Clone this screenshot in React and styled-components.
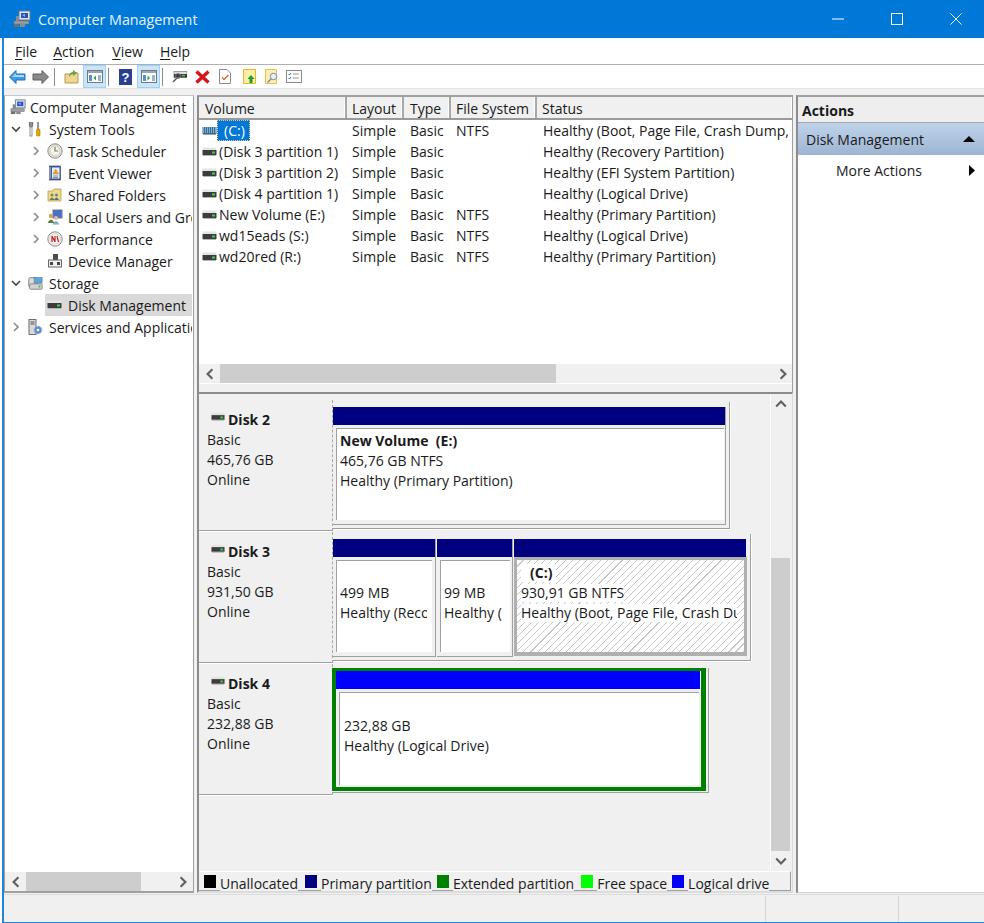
import React from "react";
import styled, { createGlobalStyle } from "styled-components";

const GlobalStyle = createGlobalStyle`
  html, body { margin: 0; padding: 0; background: #fff; }
  body { font-family: "Open Sans", "Noto Sans", sans-serif; font-size: 14px; color: #1a1a1a; }
  * { box-sizing: border-box; }
`;

const Window = styled.div`
  width: 984px;
  height: 923px;
  overflow: hidden;
  background: #fff;
  padding-left: 2px;
`;

const Frame = styled.div`
  height: 923px;
  display: flex;
  flex-direction: column;
  background: #f0f0f0;
  border-left: 2px solid #1f86d8;
  border-bottom: 1px solid #1f86d8;
`;

const TitleBar = styled.div`
  height: 38px;
  flex: none;
  margin-left: -4px;
  background: #0078d7;
  color: #e8f2fb;
  display: flex;
  align-items: center;
  padding-left: 13px;
  font-size: 14.3px;
`;

const TitleText = styled.span`
  margin-left: 7px;
  flex: 1;
`;

const WinButton = styled.div`
  width: 59px;
  height: 38px;
  padding-left: 2px;
  display: flex;
  align-items: center;
  justify-content: center;
`;

const MenuBar = styled.div`
  height: 27px;
  flex: none;
  background: #fff;
  border-bottom: 1px solid #b0b0b0;
  display: flex;
  align-items: center;
  padding-left: 11px;
  gap: 16px;
`;

const MenuItem = styled.span`
  margin-left: ${(p) => p.$ml || 0}px;
  u { text-underline-offset: 2px; }
`;

const ToolBar = styled.div`
  height: 23px;
  flex: none;
  background: #fff;
  display: flex;
  align-items: center;
  padding-left: 2px;
`;

const ToolSlot = styled.div`
  width: ${(p) => p.$w || 23}px;
  height: 23px;
  flex: none;
  margin-left: ${(p) => p.$ml || 0}px;
  display: flex;
  align-items: center;
  justify-content: center;
  ${(p) => p.$on && "background: #cce4f7; border: 1px solid #99d1ff;"}
`;

const ToolSep = styled.div`
  width: 1px;
  height: 18px;
  flex: none;
  background: #8a8a8a;
  margin: 0 ${(p) => p.$r}px 0 ${(p) => p.$l}px;
`;

const Body = styled.div`
  flex: 1;
  min-height: 0;
  display: flex;
  padding-top: 6px;
  border-top: 1px solid #e4e4e4;
`;

const Pane = styled.div`
  display: flex;
  flex-direction: column;
  background: #fff;
  border-top: 2px solid #a0a0a0;
  border-left: 2px solid #8c8c8c;
  border-right: 1px solid #a0a0a0;
  border-bottom: 2px solid #a0a0a0;
`;

const TreePane = styled(Pane)`
  width: 190px;
  height: 798px;
  border-top: 1px solid #c8c8c8;
  border-left: 1px solid #a0a0a0;
  margin-right: 3px;
`;

const TreeList = styled.div`
  flex: 1;
  overflow: hidden;
`;

const TreeRow = styled.div`
  height: 22px;
  display: flex;
  align-items: center;
  white-space: nowrap;
  overflow: hidden;
  width: 187px;
  padding-left: ${(p) => p.$indent}px;
`;

const Chevron = styled.div`
  width: 16px;
  flex: none;
  margin-right: 1px;
  display: flex;
  justify-content: center;
`;

const TreeItem = styled.div`
  flex: 1;
  height: 22px;
  display: flex;
  align-items: center;
  padding-left: 2px;
  ${(p) => p.$sel && "background: #d9d9d9;"}
`;

const TreeIcon = styled.div`
  width: 16px;
  height: 16px;
  flex: none;
  margin-right: ${(p) => p.$mr || 5}px;
  display: flex;
  align-items: center;
`;

const HScroll = styled.div`
  height: 19px;
  flex: none;
  background: #f0f0f0;
  display: flex;
  align-items: center;
`;

const Arrow = styled.div`
  width: ${(p) => p.$w || 21}px;
  height: ${(p) => p.$h || 19}px;
  flex: none;
  display: flex;
  align-items: center;
  justify-content: center;
`;

const HThumbTrack = styled.div`
  flex: 1;
  height: 19px;
`;

const HThumb = styled.div`
  height: 19px;
  background: #cdcdcd;
  width: ${(p) => p.$w}px;
`;

const Center = styled.div`
  width: 596px;
  height: 798px;
  display: flex;
  flex-direction: column;
  margin-right: 3px;
`;

const ListPane = styled(Pane)`
  height: 297px;
  flex: none;
  border-bottom: none;
`;

const HeaderRow = styled.div`
  display: flex;
  height: 23px;
  flex: none;
  background: #f0f0f0;
  border-bottom: 2px solid #9a9a9a;
`;

const HeaderCell = styled.div`
  width: ${(p) => p.$w}px;
  flex: none;
  padding-left: ${(p) => p.$pl || 5}px;
  line-height: 24px;
  border-right: 2px solid #a8a8a8;
  box-shadow: inset -1px 0 0 #fff;
  &:last-child { border-right: none; flex: 1; }
`;

const ListBody = styled.div`
  flex: 1;
  background: #fff;
`;

const ListRow = styled.div`
  height: 21px;
  display: flex;
  align-items: center;
  white-space: nowrap;
  overflow: hidden;
`;

const Cell = styled.div`
  width: ${(p) => p.$w}px;
  flex: none;
  padding-left: ${(p) => p.$pl || 5}px;
  overflow: hidden;
`;

const VolumeCell = styled.div`
  width: 148px;
  flex: none;
  display: flex;
  align-items: center;
  padding-left: 3px;
`;

const VolumeText = styled.span`
  margin-left: 2px;
  ${(p) => p.$sel && `
    margin-left: 0;
    background: #0078d7;
    color: #fff;
    width: 33px;
    height: 21px;
    line-height: 19px;
    padding-left: 6px;
    border: 1px dotted #f7c58a;
  `}
`;

const ListSplit = styled.div`
  height: 9px;
  flex: none;
  background: #f0f0f0;
  border-top: 1px solid #fff;
`;

const GraphPane = styled.div`
  flex: 1;
  min-height: 0;
  display: flex;
  flex-direction: column;
  background: #f0f0f0;
  border-top: 2px solid #8c8c8c;
  border-left: 2px solid #8c8c8c;
  border-right: 1px solid #dcdcdc;
  border-bottom: 2px solid #dcdcdc;
`;

const GraphMain = styled.div`
  flex: 1;
  min-height: 0;
  display: flex;
`;

const DiskList = styled.div`
  width: 572px;
  padding-top: 6px;
  flex: none;
  border-right: 1px solid #fff;
`;

const DiskRow = styled.div`
  height: 132px;
  display: flex;
`;

const DiskInfo = styled.div`
  width: 134px;
  height: 131px;
  flex: none;
  padding: 9px 0 0 8px;
  line-height: 20px;
  border-bottom: 1px solid #a0a0a0;
  border-right: 1px dashed #a8a8a8;
  box-shadow: 0 1px 0 #fff;
`;

const DiskName = styled.div`
  display: flex;
  font-weight: 700;
  height: 21px;
  align-items: center;
  svg { margin: -6px 3px 0 4px; }
`;

const VolumeFrame = styled.div`
  display: flex;
  height: 127px;
  margin-top: 2px;
  padding-top: 5px;
  border-right: 1px solid #a0a0a0;
  border-bottom: 1px solid #a0a0a0;
  box-shadow: 1px 1px 0 #fff;
  width: ${(p) => p.$w}px;
`;

const Volume = styled.div`
  width: ${(p) => p.$w}px;
  height: 118px;
  flex: none;
  display: flex;
  flex-direction: column;
  margin-right: 1px;
  ${(p) => !p.$bare && "border-right: 1px solid #a0a0a0; border-bottom: 1px solid #a0a0a0;"}
`;

const VolumeBar = styled.div`
  height: 18px;
  flex: none;
  background: ${(p) => p.$color};
  margin-right: ${(p) => p.$mr || 0}px;
`;

const VolumeBox = styled.div`
  margin: 3px ${(p) => p.$mr}px 0 3px;
  height: ${(p) => p.$h || 92}px;
  padding: ${(p) => p.$pt || 2}px 0 0 ${(p) => p.$pl || 3}px;
  line-height: 20px;
  white-space: nowrap;
  overflow: hidden;
  background: #fff;
  border-top: 1px solid #a0a0a0;
  border-left: 1px solid #a0a0a0;
`;

const HatchedBox = styled.div`
  height: 99px;
  padding: 3px 0 0 4px;
  border-style: solid;
  border-color: #b0b0b0;
  border-width: 3px 3px 4px 3px;
  line-height: 20px;
  white-space: nowrap;
  overflow: hidden;
  background: repeating-linear-gradient(135deg, #fff 0 4.2px, #c6c6c6 4.2px 5px);
`;

const ClipLine = styled.div`
  overflow: hidden;
  margin-right: ${(p) => p.$mr || 0}px;
`;

const WhiteText = styled.span`
  display: inline-block;
  height: 18px;
  line-height: 18px;
  margin: 1px 0;
  vertical-align: top;
  background: #fff;
`;

const Bold = styled.div`
  font-weight: 700;
  min-height: 20px;
`;

const HatchTitle = styled(WhiteText)`
  font-weight: 700;
  padding: 0 4px 0 9px;
`;

const LogicalOuter = styled.div`
  width: 377px;
  height: 125px;
  margin: 4px 0 0 -1px;
  border-right: 1px solid #a0a0a0;
  border-bottom: 1px solid #a0a0a0;
`;

const LogicalFrame = styled.div`
  width: 374px;
  height: 123px;
  border: 4px solid #008000;
  border-top-width: 3px;
  border-right-width: 5px;
  display: flex;
  flex-direction: column;
`;

const VScroll = styled.div`
  width: 19px;
  flex: none;
  display: flex;
  flex-direction: column;
  background: #f0f0f0;
`;

const VTrack = styled.div`
  flex: 1;
  padding-top: 144px;
  display: flex;
  flex-direction: column;
`;

const VThumb = styled.div`
  flex: 1;
  background: #cdcdcd;
`;

const Legend = styled.div`
  height: 20px;
  flex: none;
  display: flex;
  border-top: 1px solid #fff;
  border-right: 1px solid #a0a0a0;
  margin-right: 1px;
  white-space: nowrap;
`;

const LegendKey = styled.div`
  width: ${(p) => p.$w}px;
  flex: none;
  padding: 3px 0 0 ${(p) => p.$pl}px;
  border-bottom: 1px solid #a0a0a0;
`;

const LegendLabel = styled.div`
  line-height: 24px;
  height: 20px;
  flex: none;
`;

const LegendFill = styled.div`
  flex: 1;
  border-bottom: 1px solid #a0a0a0;
`;

const Swatch = styled.div`
  width: 12px;
  height: 13px;
  background: ${(p) => p.$color};
`;

const ActionsPane = styled(Pane)`
  flex: 1;
  height: 798px;
  border-right: none;
  border-bottom: 1px solid #d0d0d0;
`;

const ActionsHead = styled.div`
  height: 26px;
  flex: none;
  background: #eeeeee;
  border-bottom: 1px solid #a8a8a8;
  font-weight: 700;
  padding-left: 4px;
  line-height: 27px;
`;

const ActionsSection = styled.div`
  height: 32px;
  flex: none;
  background: linear-gradient(#bfd3ea, #9db5d2);
  display: flex;
  align-items: center;
  justify-content: space-between;
  padding: 0 9px 0 8px;
`;

const ActionItem = styled.div`
  height: 30px;
  display: flex;
  align-items: center;
  justify-content: space-between;
  padding: 0 9px 0 38px;
`;

const StatusBar = styled.div`
  height: 28px;
  flex: none;
  display: flex;
  justify-content: flex-end;
  border-top: 1px solid #dcdcdc;
`;

const StatusCell = styled.div`
  width: ${(p) => p.$w}px;
  margin-top: 1px;
  border-left: 1px solid #d4d4d4;
`;

// little icons, all hand drawn
const ChevronIcon = ({ dir, color = "#8a8a8a", size = 10, width = 1.6 }) => {
  const d = {
    right: "M3 1 L7 5 L3 9",
    down: "M1 3 L5 7 L9 3",
    left: "M7 1 L3 5 L7 9",
    up: "M1 7 L5 3 L9 7",
  }[dir];
  return (
    <svg width={size} height={size} viewBox="0 0 10 10">
      <path d={d} fill="none" stroke={color} strokeWidth={width} />
    </svg>
  );
};

const ScrollArrow = ({ dir }) => <ChevronIcon dir={dir} color="#606060" size={12} width={1.8} />;

const DiskIcon = ({ w = 15 }) => (
  <svg width={w} height="10" viewBox="0 0 15 10">
    <rect x="0.5" y="0.5" width="14" height="3" fill="#e4e4e4" />
    <rect x="0.5" y="3" width="14" height="5" fill="#3c3c3c" />
    <rect x="10" y="4.5" width="3" height="2" fill="#39d353" />
    <rect x="1" y="8" width="13" height="1" fill="#b4b4b4" />
  </svg>
);

const HatchDiskIcon = () => (
  <svg width="15" height="10" viewBox="0 0 15 10">
    <rect x="0.5" y="1" width="14" height="7" fill="#2f6f9f" />
    <path d="M1 2h13M1 4h13M1 6h13" stroke="#dfe9ef" strokeDasharray="1 1" />
    <rect x="1" y="8" width="13" height="1" fill="#a0a0a0" />
  </svg>
);

const ComputerIcon = () => (
  <svg width="18" height="18" viewBox="0 0 18 18">
    <rect x="6" y="1" width="11" height="9" fill="#dfe6f3" stroke="#6f7a8c" />
    <rect x="8" y="3" width="7" height="5" fill="#2b4fc0" />
    <path d="M9 5 l3 -1 v3z" fill="#8fb0f2" />
    <rect x="1" y="11" width="15" height="3" fill="#9aa0a6" stroke="#6d6d6d" strokeWidth="0.6" />
    <rect x="1" y="14" width="5" height="3" fill="#6f6f6f" />
    <rect x="7" y="14" width="5" height="3" fill="#8d8d8d" />
    <rect x="3" y="6" width="3" height="5" fill="#7b8da0" />
  </svg>
);

const ToolsIcon = () => (
  <svg width="16" height="16" viewBox="0 0 16 16">
    <path d="M4 1v4M2.5 1v3.5a1.5 1.5 0 0 0 3 0V1M4 6v8" fill="none" stroke="#777" strokeWidth="1.3" />
    <rect x="3" y="6" width="2" height="9" fill="#fff" stroke="#777" strokeWidth="0.8" />
    <path d="M11 1 v8" stroke="#8a8a8a" strokeWidth="1.8" />
    <rect x="9.5" y="8" width="3.5" height="7" rx="1" fill="#e5a600" stroke="#a87700" strokeWidth="0.6" />
  </svg>
);

const ClockIcon = () => (
  <svg width="16" height="16" viewBox="0 0 16 16">
    <circle cx="8" cy="8" r="7.2" fill="#e7e2d2" stroke="#8d8d8d" />
    <circle cx="8" cy="8" r="5" fill="#f6f4ec" stroke="#bcb7a8" strokeWidth="0.6" />
    <path d="M8 4v4h3" fill="none" stroke="#777" strokeWidth="1.2" />
  </svg>
);

const EventIcon = () => (
  <svg width="16" height="16" viewBox="0 0 16 16">
    <rect x="2.5" y="1" width="11" height="14" fill="#3f5ea8" stroke="#334" strokeWidth="0.6" />
    <rect x="5" y="2.5" width="7.5" height="11" fill="#e9edf6" />
    <path d="M8.7 4 L11.5 9 H6 Z" fill="#e8b200" stroke="#a66" strokeWidth="0.4" />
    <path d="M6 11h5M6 12.5h5" stroke="#777" strokeWidth="0.8" />
    <path d="M2 3h2M2 5h2M2 7h2M2 9h2M2 11h2M2 13h2" stroke="#ddd" strokeWidth="0.8" />
  </svg>
);

const SharedIcon = () => (
  <svg width="16" height="16" viewBox="0 0 16 16">
    <path d="M1 4 h5 l1 -2 h7 v12 H1z" fill="#efd98c" stroke="#b79a4a" strokeWidth="0.8" />
    <circle cx="5" cy="8" r="1.5" fill="#7a8a5a" />
    <circle cx="9.5" cy="8" r="1.5" fill="#5a7fa0" />
    <path d="M2.5 13 q2.5 -5 5 0z" fill="#6b7c45" />
    <path d="M7 13 q2.5 -5 5 0z" fill="#4d6f90" />
  </svg>
);

const UsersIcon = () => (
  <svg width="16" height="16" viewBox="0 0 16 16">
    <rect x="6" y="1" width="9" height="8" fill="#4a6fd0" stroke="#6f7a8c" />
    <circle cx="4" cy="7" r="2.2" fill="#d6a15a" />
    <path d="M0.5 14 q3.5 -7 7 0z" fill="#5d7f3e" />
    <circle cx="9" cy="9" r="2" fill="#e2c08a" />
    <path d="M5.5 15.5 q3.5 -7 7 0z" fill="#8aa7c8" />
  </svg>
);

const PerfIcon = () => (
  <svg width="16" height="16" viewBox="0 0 16 16">
    <circle cx="8" cy="8" r="7.2" fill="#efefef" stroke="#8d8d8d" />
    <circle cx="8" cy="8" r="5.2" fill="#fff" stroke="#bdbdbd" strokeWidth="0.6" />
    <path d="M5 11 V5 L8 11 V5 M10 5 L11.5 11" fill="none" stroke="#c62828" strokeWidth="1.3" />
  </svg>
);

const DeviceIcon = () => (
  <svg width="16" height="16" viewBox="0 0 16 16">
    <rect x="6" y="1" width="5" height="6" fill="#4a4a4a" />
    <rect x="1.5" y="7" width="13" height="7" fill="#f2f2f2" stroke="#666" />
    <rect x="3" y="9" width="3" height="3" fill="#444" />
    <rect x="10" y="9" width="3" height="3" fill="#444" />
  </svg>
);

const StorageIcon = () => (
  <svg width="18" height="16" viewBox="0 0 18 16">
    <rect x="2" y="2" width="10" height="11" rx="2" fill="#dcdcdc" stroke="#777" />
    <rect x="3" y="9" width="14" height="6" rx="1" fill="#d4d4d4" stroke="#7f7f7f" />
    <rect x="8" y="2" width="9" height="6" fill="#5aa6dd" stroke="#4d7fa8" strokeWidth="0.7" />
    <rect x="13" y="11" width="2" height="2" fill="#4caf50" />
  </svg>
);

const ServicesIcon = () => (
  <svg width="16" height="16" viewBox="0 0 16 16">
    <rect x="2" y="0.5" width="7" height="15" fill="#d8d8d8" stroke="#6d6d6d" />
    <path d="M3.5 3h4M3.5 5h4" stroke="#555" />
    <circle cx="11" cy="11" r="3.8" fill="#5f8fd0" stroke="#8ab0e0" strokeDasharray="1.5 1" />
    <circle cx="11" cy="11" r="1.3" fill="#fff" />
  </svg>
);

const PanelArrowIcon = ({ flip }) => (
  <svg width="16" height="13" viewBox="0 0 16 13">
    <rect x="0.5" y="0.5" width="15" height="12" fill="#fff" stroke="#6c7a86" />
    <rect x="1" y="1" width="14" height="2" fill="#9aa7b2" />
    <rect x="2" y="5" width="3" height="6" fill="#5f90bd" />
    <rect x="11" y="5" width="3" height="6" fill="#9fb5c7" />
    <path d={flip ? "M6.5 5.5 L9 8 L6.5 10.5Z" : "M9 5.5 L6.5 8 L9 10.5Z"} fill="#2f9e4f" />
  </svg>
);

const treeRows = [
  { indent: 3, icon: <ComputerIcon />, label: "Computer Management", noChevron: true, gap: 4 },
  { indent: 3, chevron: "down", icon: <ToolsIcon />, label: "System Tools", gap: 6 },
  { indent: 23, chevron: "right", icon: <ClockIcon />, label: "Task Scheduler" },
  { indent: 23, chevron: "right", icon: <EventIcon />, label: "Event Viewer" },
  { indent: 23, chevron: "right", icon: <SharedIcon />, label: "Shared Folders" },
  { indent: 23, chevron: "right", icon: <UsersIcon />, label: "Local Users and Groups" },
  { indent: 23, chevron: "right", icon: <PerfIcon />, label: "Performance" },
  { indent: 23, icon: <DeviceIcon />, label: "Device Manager" },
  { indent: 3, chevron: "down", icon: <StorageIcon />, label: "Storage", gap: 6 },
  { indent: 23, icon: <DiskIcon />, label: "Disk Management", sel: true },
  { indent: 3, chevron: "right", icon: <ServicesIcon />, label: "Services and Applications", gap: 6 },
];

const volumes = [
  { name: "(C:)", fs: "NTFS", status: "Healthy (Boot, Page File, Crash Dump, Primary Partition)", sel: true },
  { name: "(Disk 3 partition 1)", fs: "", status: "Healthy (Recovery Partition)" },
  { name: "(Disk 3 partition 2)", fs: "", status: "Healthy (EFI System Partition)" },
  { name: "(Disk 4 partition 1)", fs: "", status: "Healthy (Logical Drive)" },
  { name: "New Volume (E:)", fs: "NTFS", status: "Healthy (Primary Partition)" },
  { name: "wd15eads (S:)", fs: "NTFS", status: "Healthy (Logical Drive)" },
  { name: "wd20red (R:)", fs: "NTFS", status: "Healthy (Primary Partition)" },
];

const legend = [
  { color: "#000", label: "Unallocated", w: 21, pl: 5 },
  { color: "#000080", label: "Primary partition", w: 23, pl: 7 },
  { color: "#008000", label: "Extended partition", w: 21, pl: 5 },
  { color: "#00ff00", label: "Free space", w: 23, pl: 7 },
  { color: "#0000ff", label: "Logical drive", w: 21, pl: 5 },
];

const DiskLabel = ({ name, size }) => (
  <DiskInfo>
    <DiskName>
      <DiskIcon w={14} />
      {name}
    </DiskName>
    <div>Basic</div>
    <div>{size}</div>
    <div>Online</div>
  </DiskInfo>
);

const App = () => (
  <>
    <GlobalStyle />
    <Window>
      <Frame>
        <TitleBar>
          <ComputerIcon />
          <TitleText>Computer Management</TitleText>
          <WinButton>
            <svg width="12" height="2" viewBox="0 0 12 2"><rect width="12" height="1" y="0.5" fill="#fff" /></svg>
          </WinButton>
          <WinButton>
            <svg width="12" height="12" viewBox="0 0 12 12"><rect x="0.5" y="0.5" width="11" height="11" fill="none" stroke="#fff" /></svg>
          </WinButton>
          <WinButton>
            <svg width="12" height="12" viewBox="0 0 12 12"><path d="M0.5 0.5 L11.5 11.5 M11.5 0.5 L0.5 11.5" stroke="#fff" /></svg>
          </WinButton>
        </TitleBar>

        <MenuBar>
          <MenuItem><u>F</u>ile</MenuItem>
          <MenuItem><u>A</u>ction</MenuItem>
          <MenuItem $ml={2}><u>V</u>iew</MenuItem>
          <MenuItem $ml={1}><u>H</u>elp</MenuItem>
        </MenuBar>

        <ToolBar>
          <ToolSlot>
            <svg width="17" height="14" viewBox="0 0 17 14">
              <path d="M0.5 7 L7 0.5 V4 H16 V10 H7 V13.5Z" fill="#3d9be9" stroke="#1b6fb8" />
              <path d="M3 7 L7 3 V5 H15 V7Z" fill="#a6d8fb" />
            </svg>
          </ToolSlot>
          <ToolSlot>
            <svg width="17" height="14" viewBox="0 0 17 14">
              <path d="M16.5 7 L10 0.5 V4 H1 V10 H10 V13.5Z" fill="#8a8a8a" stroke="#5d5d5d" />
            </svg>
          </ToolSlot>
          <ToolSep $l={2} $r={6} />
          <ToolSlot $w={20}>
            <svg width="15" height="15" viewBox="0 0 15 15">
              <path d="M1 5 h5 l1 -1 h7 v10 H1z" fill="#f1d592" stroke="#b89a4e" />
              <path d="M5 8 q0 -4 4 -5 V1 l4 3 -4 3 V5 q-2 0 -4 3z" fill="#58a83a" />
            </svg>
          </ToolSlot>
          <ToolSlot $on $ml={2}>
            <PanelArrowIcon />
          </ToolSlot>
          <ToolSep $l={2} $r={7} />
          <ToolSlot $w={18}>
            <svg width="13" height="16" viewBox="0 0 13 16">
              <rect width="13" height="16" fill="#2a3f8f" />
              <text x="6.5" y="13" fontSize="13" fontWeight="700" textAnchor="middle" fill="#fff" fontFamily="Liberation Sans">?</text>
            </svg>
          </ToolSlot>
          <ToolSlot $on $ml={3}>
            <PanelArrowIcon flip />
          </ToolSlot>
          <ToolSep $l={2} $r={5} />
          <ToolSlot>
            <svg width="15" height="14" viewBox="0 0 15 14">
              <rect x="2" y="1.5" width="13" height="6" fill="#ddd" stroke="#666" strokeWidth="0.6" />
              <rect x="2" y="4" width="13" height="3.5" fill="#3a3a3a" />
              <rect x="10" y="4.8" width="3" height="1.6" fill="#39d353" />
              <path d="M5 8 L1 12" stroke="#555" strokeWidth="1.5" />
              <circle cx="6" cy="6" r="2.5" fill="none" stroke="#777" />
            </svg>
          </ToolSlot>
          <ToolSlot $w={22}>
            <svg width="15" height="14" viewBox="0 0 15 14">
              <path d="M1.5 1.5 L13.5 12.5 M13.5 1.5 L1.5 12.5" stroke="#d8141a" strokeWidth="3.4" />
            </svg>
          </ToolSlot>
          <ToolSlot $w={24}>
            <svg width="12" height="15" viewBox="0 0 12 15">
              <path d="M0.5 0.5 H8 L11.5 4 V14.5 H0.5Z" fill="#fff" stroke="#8a8a8a" />
              <path d="M3 8 L5 10.5 L9.5 6" fill="none" stroke="#e0562a" strokeWidth="1.2" />
            </svg>
          </ToolSlot>
          <ToolSlot $w={24}>
            <svg width="13" height="15" viewBox="0 0 13 15">
              <path d="M0.5 0.5 H12.5 V14.5 H0.5Z" fill="#fdf0a6" stroke="#e3b82f" />
              <path d="M8 6 L11.5 10 H9.5 V14 H6.5 V10 H4.5Z" fill="#1aa032" />
            </svg>
          </ToolSlot>
          <ToolSlot $w={21}>
            <svg width="14" height="15" viewBox="0 0 14 15">
              <path d="M0.5 0.5 H11.5 V14.5 H0.5Z" fill="#fdeeb4" stroke="#e3c04f" />
              <circle cx="8.5" cy="7.5" r="3.2" fill="#eaf2f7" stroke="#7b8a99" />
              <path d="M6 10 L2.5 13.5" stroke="#7b8a99" strokeWidth="1.5" />
            </svg>
          </ToolSlot>
          <ToolSlot>
            <svg width="16" height="13" viewBox="0 0 16 13">
              <rect x="0.5" y="0.5" width="15" height="12" fill="#fbfbfb" stroke="#8a8a8a" />
              <path d="M2.5 4 L3.5 5 L5 3 M2.5 8 L3.5 9 L5 7" fill="none" stroke="#3a7bc0" />
              <path d="M7 4H13M7 8H13" stroke="#999" />
            </svg>
          </ToolSlot>
        </ToolBar>

        <Body>
          <TreePane>
            <TreeList>
              {treeRows.map((r) => (
                <TreeRow key={r.label} $indent={r.indent}>
                  {!r.noChevron && (
                    <Chevron>
                      {r.chevron && <ChevronIcon dir={r.chevron} color={r.chevron === "down" ? "#444" : "#8a8a8a"} />}
                    </Chevron>
                  )}
                  <TreeItem $sel={r.sel}>
                    <TreeIcon $mr={r.gap}>{r.icon}</TreeIcon>
                    {r.label}
                  </TreeItem>
                </TreeRow>
              ))}
            </TreeList>
            <HScroll>
              <Arrow><ScrollArrow dir="left" /></Arrow>
              <HThumbTrack><HThumb $w={115} /></HThumbTrack>
              <Arrow><ScrollArrow dir="right" /></Arrow>
            </HScroll>
          </TreePane>

          <Center>
            <ListPane>
              <HeaderRow>
                <HeaderCell $w={148} $pl={6}>Volume</HeaderCell>
                <HeaderCell $w={57}>Layout</HeaderCell>
                <HeaderCell $w={47} $pl={6}>Type</HeaderCell>
                <HeaderCell $w={86}>File System</HeaderCell>
                <HeaderCell $w={254}>Status</HeaderCell>
              </HeaderRow>
              <ListBody>
                {volumes.map((v) => (
                  <ListRow key={v.name}>
                    <VolumeCell>
                      {v.sel ? <HatchDiskIcon /> : <DiskIcon />}
                      <VolumeText $sel={v.sel}>{v.name}</VolumeText>
                    </VolumeCell>
                    <Cell $w={57}>Simple</Cell>
                    <Cell $w={47} $pl={6}>Basic</Cell>
                    <Cell $w={86}>{v.fs}</Cell>
                    <Cell $w={254} $pl={6}>{v.status}</Cell>
                  </ListRow>
                ))}
              </ListBody>
              <HScroll>
                <Arrow><ScrollArrow dir="left" /></Arrow>
                <HThumbTrack><HThumb $w={336} /></HThumbTrack>
                <Arrow $w={19}><ScrollArrow dir="right" /></Arrow>
              </HScroll>
              <ListSplit />
            </ListPane>

            <GraphPane>
              <GraphMain>
                <DiskList>
                  <DiskRow>
                    <DiskLabel name="Disk 2" size="465,76 GB" />
                    <VolumeFrame $w={397}>
                      <Volume $w={393}>
                        <VolumeBar $color="#000080" />
                        <VolumeBox $mr={1}>
                          <Bold>New Volume&nbsp; (E:)</Bold>
                          <div>465,76 GB NTFS</div>
                          <div>Healthy (Primary Partition)</div>
                        </VolumeBox>
                      </Volume>
                    </VolumeFrame>
                  </DiskRow>
                  <DiskRow>
                    <DiskLabel name="Disk 3" size="931,50 GB" />
                    <VolumeFrame $w={418}>
                      <Volume $w={103}>
                        <VolumeBar $color="#000080" />
                        <VolumeBox $mr={3}>
                          <Bold />
                          <div>499 MB</div>
                          <ClipLine $mr={5}>Healthy (Recovery Partition)</ClipLine>
                        </VolumeBox>
                      </Volume>
                      <Volume $w={76}>
                        <VolumeBar $color="#000080" />
                        <VolumeBox $mr={2}>
                          <Bold />
                          <div>99 MB</div>
                          <ClipLine $mr={8}>Healthy (EFI System Partition)</ClipLine>
                        </VolumeBox>
                      </Volume>
                      <Volume $w={233} $bare>
                        <VolumeBar $color="#000080" $mr={1} />
                        <HatchedBox>
                          <div><HatchTitle>(C:)</HatchTitle></div>
                          <div><WhiteText>930,91 GB NTFS</WhiteText></div>
                          <ClipLine $mr={7}><WhiteText>Healthy (Boot, Page File, Crash Dump, Primary Partition)</WhiteText></ClipLine>
                        </HatchedBox>
                      </Volume>
                    </VolumeFrame>
                  </DiskRow>
                  <DiskRow>
                    <DiskLabel name="Disk 4" size="232,88 GB" />
                    <LogicalOuter>
                      <LogicalFrame>
                        <VolumeBar $color="#0000ff" $mr={1} />
                        <VolumeBox $mr={2} $h={93} $pt={3} $pl={4}>
                          <Bold />
                          <div>232,88 GB</div>
                          <div>Healthy (Logical Drive)</div>
                        </VolumeBox>
                      </LogicalFrame>
                    </LogicalOuter>
                  </DiskRow>
                </DiskList>
                <VScroll>
                  <Arrow $w={19} $h={20}><ScrollArrow dir="up" /></Arrow>
                  <VTrack><VThumb /></VTrack>
                  <Arrow $w={19} $h={20}><ScrollArrow dir="down" /></Arrow>
                </VScroll>
              </GraphMain>
              <Legend>
                {legend.map((l) => (
                  <React.Fragment key={l.label}>
                    <LegendKey $w={l.w} $pl={l.pl}>
                      <Swatch $color={l.color} />
                    </LegendKey>
                    <LegendLabel>{l.label}</LegendLabel>
                  </React.Fragment>
                ))}
                <LegendFill />
              </Legend>
            </GraphPane>
          </Center>

          <ActionsPane>
            <ActionsHead>Actions</ActionsHead>
            <ActionsSection>
              Disk Management
              <svg width="12" height="6" viewBox="0 0 12 6"><path d="M0 6 L6 0 L12 6Z" fill="#000" /></svg>
            </ActionsSection>
            <ActionItem>
              More Actions
              <svg width="6" height="11" viewBox="0 0 6 11"><path d="M0 0 L6 5.5 L0 11Z" fill="#000" /></svg>
            </ActionItem>
          </ActionsPane>
        </Body>

        <StatusBar>
          <StatusCell $w={133} />
          <StatusCell $w={86} />
        </StatusBar>
      </Frame>
    </Window>
  </>
);

export default App;
